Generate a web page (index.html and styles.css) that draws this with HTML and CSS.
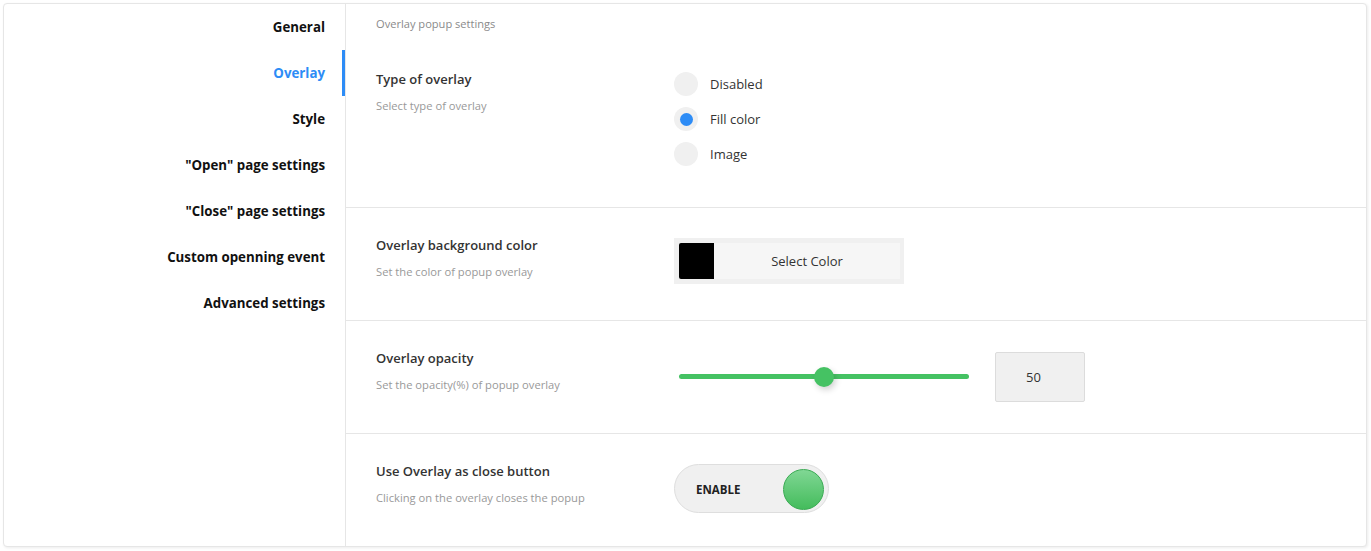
FILE: index.html
```html
<!DOCTYPE html>
<html lang="en">
<head>
<meta charset="utf-8">
<title>Overlay settings</title>
<link rel="stylesheet" href="styles.css">
</head>
<body>
<div class="card">
  <nav class="sidebar">
    <a class="nav-item">General</a>
    <a class="nav-item active">Overlay</a>
    <a class="nav-item">Style</a>
    <a class="nav-item">"Open" page settings</a>
    <a class="nav-item">"Close" page settings</a>
    <a class="nav-item">Custom openning event</a>
    <a class="nav-item">Advanced settings</a>
  </nav>
  <main class="main">
    <div class="intro">Overlay popup settings</div>

    <section class="row">
      <div class="label-col">
        <div class="title">Type of overlay</div>
        <div class="desc">Select type of overlay</div>
      </div>
      <div class="control">
        <div class="radio-group">
          <label class="radio"><span class="radio-dot"></span><span class="radio-text">Disabled</span></label>
          <label class="radio checked"><span class="radio-dot"></span><span class="radio-text">Fill color</span></label>
          <label class="radio"><span class="radio-dot"></span><span class="radio-text">Image</span></label>
        </div>
      </div>
    </section>

    <section class="row bordered">
      <div class="label-col">
        <div class="title">Overlay background color</div>
        <div class="desc">Set the color of popup overlay</div>
      </div>
      <div class="control">
        <div class="picker">
          <span class="swatch"></span>
          <span class="picker-text">Select Color</span>
        </div>
      </div>
    </section>

    <section class="row bordered">
      <div class="label-col">
        <div class="title">Overlay opacity</div>
        <div class="desc">Set the opacity(%) of popup overlay</div>
      </div>
      <div class="control control-slider">
        <div class="slider">
          <div class="track"></div>
          <div class="thumb"></div>
        </div>
        <div class="number">50</div>
      </div>
    </section>

    <section class="row bordered">
      <div class="label-col">
        <div class="title">Use Overlay as close button</div>
        <div class="desc">Clicking on the overlay closes the popup</div>
      </div>
      <div class="control">
        <div class="toggle">
          <span class="toggle-text">ENABLE</span>
          <span class="knob"></span>
        </div>
      </div>
    </section>
  </main>
</div>
</body>
</html>
```

FILE: styles.css
```css
* { box-sizing: border-box; }

html, body {
  margin: 0;
  background: #ffffff;
}

body {
  padding: 3px 4px 4px 3px;
  font-family: "Open Sans", "Noto Sans", sans-serif;
  color: #333;
}

.card {
  display: flex;
  height: 544px;
  border: 1px solid #e6e6e6;
  border-radius: 4px;
  box-shadow: 1px 1px 3px rgba(0, 0, 0, 0.08);
  background: #fff;
  overflow: hidden;
}

.sidebar {
  width: 342px;
  flex: none;
  border-right: 1px solid #e6e6e6;
  display: flex;
  flex-direction: column;
}

.nav-item {
  position: relative;
  display: block;
  height: 46px;
  line-height: 46px;
  padding-right: 20px;
  text-align: right;
  font-size: 13.3px;
  font-weight: 700;
  color: #111;
}

.nav-item.active {
  color: #2d8cf6;
}

.nav-item.active::after {
  content: "";
  position: absolute;
  top: 0;
  right: 0;
  width: 3px;
  height: 100%;
  background: #2d8cf6;
}

.main {
  flex: 1;
  display: flex;
  flex-direction: column;
}

.intro {
  height: 38px;
  padding: 11px 30px 0;
  font-size: 11.1px;
  line-height: 18px;
  color: #8a8a8a;
}

.row {
  display: flex;
  align-items: flex-start;
  padding: 28px 30px 30px;
}

.row.bordered {
  border-top: 1px solid #e6e6e6;
}

.label-col {
  width: 298px;
  flex: none;
  padding-bottom: 10px;
}

.title {
  font-size: 13px;
  font-weight: 600;
  line-height: 18px;
  color: #333;
}

.desc {
  margin-top: 9px;
  margin-bottom: -1px;
  font-size: 11.2px;
  line-height: 18px;
  color: #999;
}

.control {
  margin-top: 2px;
}

/* radios */
.radio-group {
  display: flex;
  flex-direction: column;
}

.radio {
  display: flex;
  align-items: center;
  height: 24px;
  margin-bottom: 11px;
}

.radio-dot {
  width: 24px;
  height: 24px;
  border-radius: 50%;
  background: #f0f0f0;
  display: flex;
  align-items: center;
  justify-content: center;
}

.radio.checked .radio-dot::after {
  content: "";
  width: 13px;
  height: 13px;
  border-radius: 50%;
  background: #2d8cf6;
}

.radio-text {
  margin-left: 12px;
  font-size: 13px;
  color: #333;
}

/* color picker */
.picker {
  display: flex;
  width: 230px;
  height: 46px;
  padding: 5px 4px 5px 5px;
  background: #f0f0f0;
}

.swatch {
  width: 35px;
  height: 36px;
  background: #000;
  border-radius: 2px 0 0 2px;
}

.picker-text {
  flex: 1;
  display: flex;
  align-items: center;
  justify-content: center;
  background: #f6f6f6;
  font-size: 13px;
  color: #333;
}

/* slider */
.control-slider {
  display: flex;
  align-items: center;
  margin-top: 3px;
}

.slider {
  position: relative;
  width: 290px;
  height: 20px;
  margin-left: 5px;
}

.track {
  position: absolute;
  left: 0;
  right: 0;
  top: 7px;
  height: 5px;
  border-radius: 3px;
  background: #45c263;
}

.thumb {
  position: absolute;
  left: 135px;
  top: 0;
  width: 20px;
  height: 20px;
  border-radius: 50%;
  background: #45c263;
  box-shadow: 2px 3px 6px rgba(0, 0, 0, 0.18);
}

.number {
  width: 90px;
  height: 50px;
  margin-left: 26px;
  padding-left: 30px;
  line-height: 48px;
  font-size: 13px;
  color: #333;
  background: #f0f0f0;
  border: 1px solid #dcdcdc;
  border-radius: 2px;
}

/* toggle */
.toggle {
  display: flex;
  align-items: center;
  justify-content: space-between;
  width: 155px;
  height: 49px;
  padding: 1px 4px 0 21px;
  border-radius: 25px;
  background: #f0f0f0;
  border: 1px solid #dedede;
}

.toggle-text {
  font-size: 11.5px;
  font-weight: 700;
  color: #222;
}

.knob {
  width: 41px;
  height: 41px;
  border-radius: 50%;
  background: linear-gradient(#80d794, #44bc5c);
  border: 1px solid #3aaa53;
}
```
